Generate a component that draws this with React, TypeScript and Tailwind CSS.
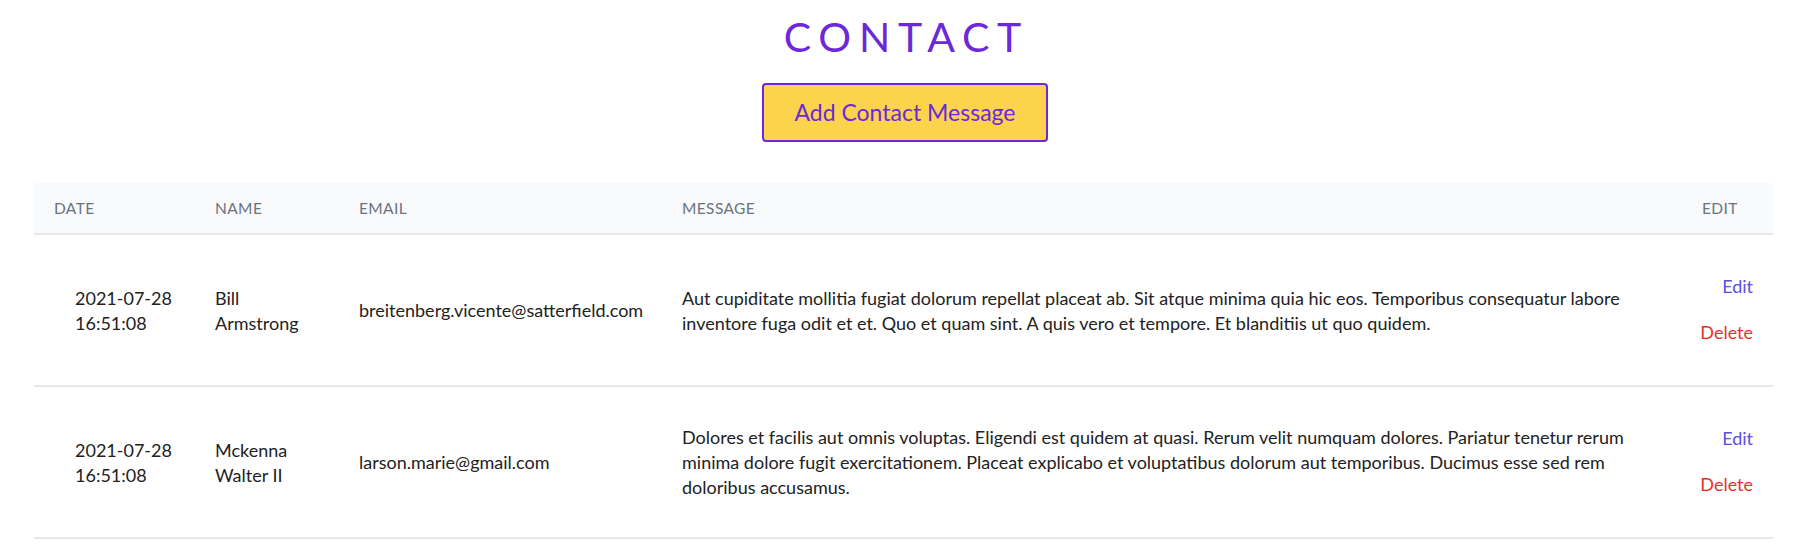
import React from "react";

interface Contact {
  id: number;
  date: string;
  time: string;
  name: string;
  email: string;
  message: string;
}

const contacts: Contact[] = [
  {
    id: 1,
    date: "2021-07-28",
    time: "16:51:08",
    name: "Bill Armstrong",
    email: "breitenberg.vicente@satterfield.com",
    message:
      "Aut cupiditate mollitia fugiat dolorum repellat placeat ab. Sit atque minima quia hic eos. Temporibus consequatur labore inventore fuga odit et et. Quo et quam sint. A quis vero et tempore. Et blanditiis ut quo quidem.",
  },
  {
    id: 2,
    date: "2021-07-28",
    time: "16:51:08",
    name: "Mckenna Walter II",
    email: "larson.marie@gmail.com",
    message:
      "Dolores et facilis aut omnis voluptas. Eligendi est quidem at quasi. Rerum velit numquam dolores. Pariatur tenetur rerum minima dolore fugit exercitationem. Placeat explicabo et voluptatibus dolorum aut temporibus. Ducimus esse sed rem doloribus accusamus.",
  },
];

const App: React.FC = () => {
  return (
    <div className="w-full min-h-[545px] bg-white font-['Lato',sans-serif] text-[#222222]">
      <div className="flex flex-col items-center pt-[11px]">
        <h1 className="ml-[3px] text-[41px] leading-[52px] tracking-[0.19em] pl-[0.19em] text-[#6d28d9]">
          CONTACT
        </h1>
        <button
          type="button"
          className="ml-[8px] mt-[20px] w-[286px] h-[59px] border-2 border-[#6d28d9] rounded-[4px] bg-[#fcd34d] text-[23px] text-[#6d28d9]"
        >
          Add Contact Message
        </button>
      </div>

      <div className="pl-[34px] pr-[29px] pt-[41px]">
        <table className="w-full table-fixed border-collapse">
          <thead>
            <tr className="bg-[#f9fafb] border-b-2 border-[#e5e7eb]">
              <th className="w-[161px] px-5 py-[13px] text-left text-[15.5px] leading-[24px] font-normal uppercase tracking-wide text-[#6b7280]">
                Date
              </th>
              <th className="w-[144px] px-5 py-[13px] text-left text-[15.5px] leading-[24px] font-normal uppercase tracking-wide text-[#6b7280]">
                Name
              </th>
              <th className="w-[323px] px-5 py-[13px] text-left text-[15.5px] leading-[24px] font-normal uppercase tracking-wide text-[#6b7280]">
                Email
              </th>
              <th className="px-5 py-[13px] text-left text-[15.5px] leading-[24px] font-normal uppercase tracking-wide text-[#6b7280]">
                Message
              </th>
              <th className="w-[91px] px-5 py-[13px] text-left text-[15.5px] leading-[24px] font-normal uppercase tracking-wide text-[#6b7280]">
                Edit
              </th>
            </tr>
          </thead>
          <tbody>
            {contacts.map((c) => (
              <tr key={c.id} className="border-b-2 border-[#e5e7eb]">
                <td className="pl-[41px] pr-0 pt-[38px] pb-[37px] align-middle whitespace-nowrap text-[18px] leading-[25px]">
                  <div>{c.date}</div>
                  <div>{c.time}</div>
                </td>
                <td className="px-5 pt-[38px] pb-[37px] align-middle text-[18px] leading-[25px]">
                  {c.name}
                </td>
                <td className="pl-5 pr-0 pt-[38px] pb-[37px] align-middle whitespace-nowrap text-[18px] leading-[25px]">
                  {c.email}
                </td>
                <td className="px-5 pt-[38px] pb-[37px] align-middle text-[18px] leading-[25px]">
                  {c.message}
                </td>
                <td className="pl-0 pr-5 pt-[39px] pb-[40px] align-middle text-right text-[18px] leading-[25px]">
                  <a href="#" className="block text-[#5b4fe6]">
                    Edit
                  </a>
                  <a href="#" className="block mt-[21px] text-[#e53030]">
                    Delete
                  </a>
                </td>
              </tr>
            ))}
          </tbody>
        </table>
      </div>
    </div>
  );
};

export default App;
